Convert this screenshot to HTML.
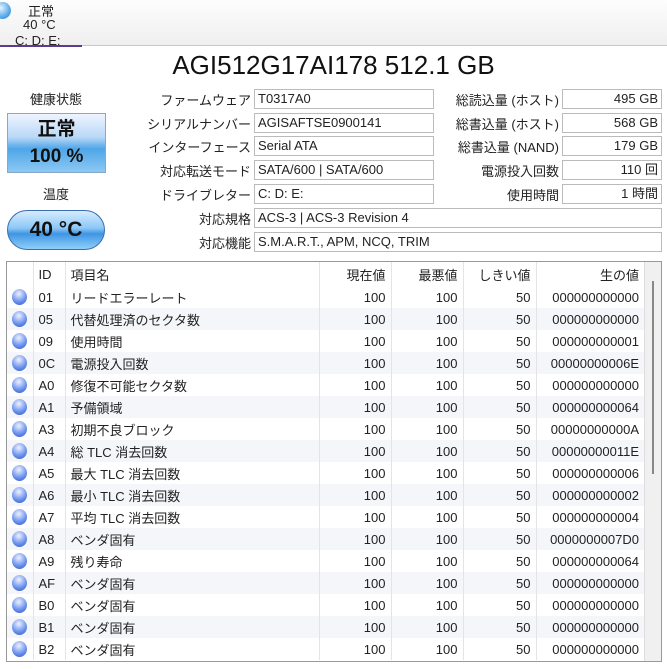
<!DOCTYPE html>
<html><head><meta charset="utf-8"><style>
*{margin:0;padding:0;box-sizing:border-box}
body{width:667px;height:669px;overflow:hidden;background:#fff;font-family:"Liberation Sans","Noto Sans CJK JP",sans-serif;color:#222;position:relative;font-size:13px}
.a{position:absolute}
.top{left:0;top:0;width:667px;height:46px;background:linear-gradient(#fdfdfd,#efefef);border-bottom:1px solid #c8c8c8}
.lab{position:absolute;text-align:right;font-size:13px;white-space:nowrap}
.box{position:absolute;height:20px;border:1px solid #bbb;background:#fff;font-size:13px;line-height:18px;padding:0 3px;white-space:nowrap}
.r{text-align:right}
table{border-collapse:collapse;font-size:13px}
td{height:22px;white-space:nowrap;padding:0 5px}
</style></head><body>
<div class="a top"></div>
<div class="a" style="left:-6px;top:2px;width:17px;height:17px;border-radius:50%;background:radial-gradient(circle at 40% 35%,#e4f4ff,#59a9ea 60%,#2a7cd0)"></div>
<div class="a" style="left:28px;top:1px;font-size:13px">正常</div>
<div class="a" style="left:23px;top:17px;font-size:13px">40 °C</div>
<div class="a" style="left:15px;top:33px;font-size:13px">C: D: E:</div>
<div class="a" style="left:0;top:45px;width:82px;height:2px;background:#5a3b8c"></div>

<div class="a" style="left:0;width:667px;top:50px;text-align:center;font-size:26px;color:#111">AGI512G17AI178 512.1 GB</div>

<div class="a" style="left:7px;width:98px;top:89px;text-align:center">健康状態</div>
<div class="a" style="left:7px;top:113px;width:99px;height:60px;border:1px solid #8aa6c8;background:linear-gradient(#eef4ff 0%,#b9d8f7 40%,#4fa6e8 60%,#8cc8f4 100%);text-align:center;font-weight:bold;font-size:19px;color:#111;line-height:27px;padding-top:2px">正常<br>100 %</div>
<div class="a" style="left:7px;width:98px;top:184px;text-align:center">温度</div>
<div class="a" style="left:7px;top:210px;width:98px;height:40px;border:1px solid #3a6eb0;border-radius:20px;background:linear-gradient(#d6ebff 0%,#8cc8f7 45%,#3f95e4 60%,#8fd0fa 100%);text-align:center;font-weight:bold;font-size:21px;line-height:38px;color:#111">40 °C</div>

<div class="lab" style="right:416px;top:90px">ファームウェア</div>
<div class="lab" style="right:416px;top:114px">シリアルナンバー</div>
<div class="lab" style="right:416px;top:137px">インターフェース</div>
<div class="lab" style="right:416px;top:161px">対応転送モード</div>
<div class="lab" style="right:416px;top:185px">ドライブレター</div>
<div class="lab" style="right:416px;top:209px">対応規格</div>
<div class="lab" style="right:416px;top:233px">対応機能</div>
<div class="box" style="left:254px;width:180px;top:89px">T0317A0</div>
<div class="box" style="left:254px;width:180px;top:113px">AGISAFTSE0900141</div>
<div class="box" style="left:254px;width:180px;top:136px">Serial ATA</div>
<div class="box" style="left:254px;width:180px;top:160px">SATA/600 | SATA/600</div>
<div class="box" style="left:254px;width:180px;top:184px">C: D: E:</div>
<div class="box" style="left:254px;width:408px;top:208px">ACS-3 | ACS-3 Revision 4</div>
<div class="box" style="left:254px;width:408px;top:232px">S.M.A.R.T., APM, NCQ, TRIM</div>

<div class="lab" style="right:108px;top:90px">総読込量 (ホスト)</div>
<div class="lab" style="right:108px;top:114px">総書込量 (ホスト)</div>
<div class="lab" style="right:108px;top:137px">総書込量 (NAND)</div>
<div class="lab" style="right:108px;top:161px">電源投入回数</div>
<div class="lab" style="right:108px;top:185px">使用時間</div>
<div class="box r" style="left:562px;width:100px;top:89px">495 GB</div>
<div class="box r" style="left:562px;width:100px;top:113px">568 GB</div>
<div class="box r" style="left:562px;width:100px;top:136px">179 GB</div>
<div class="box r" style="left:562px;width:100px;top:160px">110 回</div>
<div class="box r" style="left:562px;width:100px;top:184px">1 時間</div>

<div class="a" style="left:6px;top:261px;width:656px;height:401px;border:1px solid #999;overflow:hidden">
<div class="a" style="left:637px;top:0;width:18px;height:400px;background:#f0f0f0;border-left:1px solid #ddd"></div>
<div class="a" style="left:645px;top:19px;width:2px;height:193px;background:#888"></div>
<table class="a" style="left:0;top:0;width:637px;table-layout:fixed" id="t">
<colgroup><col style="width:26px"><col style="width:32px"><col style="width:254px"><col style="width:72px"><col style="width:72px"><col style="width:73px"><col style="width:108px"></colgroup>
</table>
</div>
<script>
var rows=[["01","リードエラーレート","000000000000"],["05","代替処理済のセクタ数","000000000000"],["09","使用時間","000000000001"],["0C","電源投入回数","00000000006E"],["A0","修復不可能セクタ数","000000000000"],["A1","予備領域","000000000064"],["A3","初期不良ブロック","00000000000A"],["A4","総 TLC 消去回数","00000000011E"],["A5","最大 TLC 消去回数","000000000006"],["A6","最小 TLC 消去回数","000000000002"],["A7","平均 TLC 消去回数","000000000004"],["A8","ベンダ固有","0000000007D0"],["A9","残り寿命","000000000064"],["AF","ベンダ固有","000000000000"],["B0","ベンダ固有","000000000000"],["B1","ベンダ固有","000000000000"],["B2","ベンダ固有","000000000000"]];
var bl='border-left:1px solid #e4e4e4;';
var h='<tr style="height:24px"><td></td><td style="'+bl+'">ID</td><td style="'+bl+'">項目名</td><td class="r" style="'+bl+'">現在値</td><td class="r" style="'+bl+'">最悪値</td><td class="r" style="'+bl+'">しきい値</td><td class="r" style="'+bl+'">生の値</td></tr>';
rows.forEach(function(r,i){var bg=i%2?'#f4f6f9':'#fff';h+='<tr style="background:'+bg+'"><td style="padding:0 0 0 5px"><div style="width:15px;height:16px;border-radius:50%;background:radial-gradient(circle at 45% 30%,#eef2ff,#6f95ee 55%,#2f52c8)"></div></td><td style="'+bl+'">'+r[0]+'</td><td style="'+bl+'">'+r[1]+'</td><td class="r" style="'+bl+'">100</td><td class="r" style="'+bl+'">100</td><td class="r" style="'+bl+'">50</td><td class="r" style="'+bl+'">'+r[2]+'</td></tr>';});
document.getElementById('t').insertAdjacentHTML('beforeend',h);
</script>
</body></html>
